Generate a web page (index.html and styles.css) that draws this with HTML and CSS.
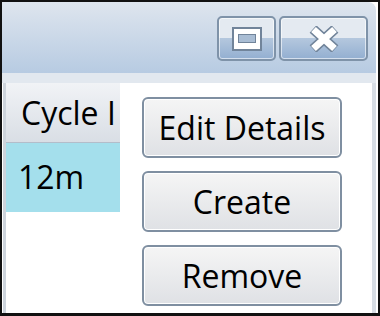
FILE: index.html
```html
<!DOCTYPE html>
<html lang="en">
<head>
  <meta charset="UTF-8">
  <title>Cycles</title>
  <link rel="stylesheet" href="styles.css">
</head>
<body>
  <div class="screen">
    <div class="frame">
      <div class="titlebar">
        <button class="cap cap-restore" aria-label="Restore">
          <svg width="30" height="24" viewBox="0 0 30 24">
            <rect x="1" y="1" width="28" height="22" fill="#fff" stroke="#71849a" stroke-width="2"/>
            <rect x="6.5" y="7.5" width="17" height="8" fill="#a9bdd4" stroke="#71849a"/>
          </svg>
        </button>
        <button class="cap cap-close" aria-label="Close">
          <svg width="32" height="26" viewBox="0 0 32 26">
            <path d="M5 3 L27 23 M27 3 L5 23" stroke="#71849a" stroke-width="10" fill="none"/>
            <path d="M5.5 3.5 L26.5 22.5 M26.5 3.5 L5.5 22.5" stroke="#fff" stroke-width="7" fill="none"/>
          </svg>
        </button>
      </div>
      <div class="strip"></div>
      <div class="body">
        <div class="side"></div>
        <div class="content">
          <div class="grid">
            <div class="grid-head">Cycle I</div>
            <div class="grid-row">12m</div>
          </div>
          <div class="actions">
            <button class="btn">Edit Details</button>
            <button class="btn">Create</button>
            <button class="btn">Remove</button>
          </div>
        </div>
        <div class="side side-right"></div>
      </div>
    </div>
  </div>
</body>
</html>
```

FILE: styles.css
```css
body { margin: 0; font-family: "Open Sans", "Noto Sans", sans-serif; }
.screen { width: 380px; height: 316px; box-sizing: border-box; border: 2px solid #111; border-bottom-width: 3px; background: #fff; padding-right: 2px; }
.frame { height: 100%; display: flex; flex-direction: column; border-top-right-radius: 8px; overflow: hidden; }
.titlebar { height: 71px; box-sizing: border-box; background: linear-gradient(#dee5ee, #b7cbe2); display: flex; justify-content: flex-end; align-items: flex-start; gap: 3px; padding: 14px 8px 0 0; }
.cap { height: 45px; box-sizing: border-box; border: 2px solid #7f93a9; border-radius: 5px; padding: 0; display: flex; align-items: center; justify-content: center; background: linear-gradient(#e4eaf1 0, #e4eaf1 48%, #b5c8de 48%, #93afd1 100%); box-shadow: inset 0 0 0 1px rgba(255,255,255,0.6); }
.cap-restore { width: 59px; }
.cap-close { width: 89px; }
.strip { height: 10px; background: #e2e8ef; }
.body { flex: 1; display: flex; }
.side { width: 4px; background: linear-gradient(90deg, #fff 0, #fff 1px, #cdd4dc 1px); }
.side-right { background: #d7dde4; }
.content { flex: 1; background: #fff; display: flex; align-items: flex-start; }
.grid { width: 114px; overflow: hidden; white-space: nowrap; font-size: 32px; }
.grid-head { height: 59px; line-height: 59px; padding-left: 15px; background: linear-gradient(#f1f3f6, #d9dee5); border-bottom: 1px solid #b3bdca; }
.grid-row { height: 69px; line-height: 68px; padding-left: 12px; background: #a4dfec; }
.actions { display: flex; flex-direction: column; gap: 13px; margin: 14px 0 0 22px; }
.btn { width: 200px; height: 61px; box-sizing: border-box; font-family: inherit; font-size: 32px; color: #000; border: 2px solid #7f8fa1; border-radius: 6px; background: linear-gradient(#f5f5f5, #dfe1e5); box-shadow: inset 0 0 0 1px #fff; padding: 0; }
```
